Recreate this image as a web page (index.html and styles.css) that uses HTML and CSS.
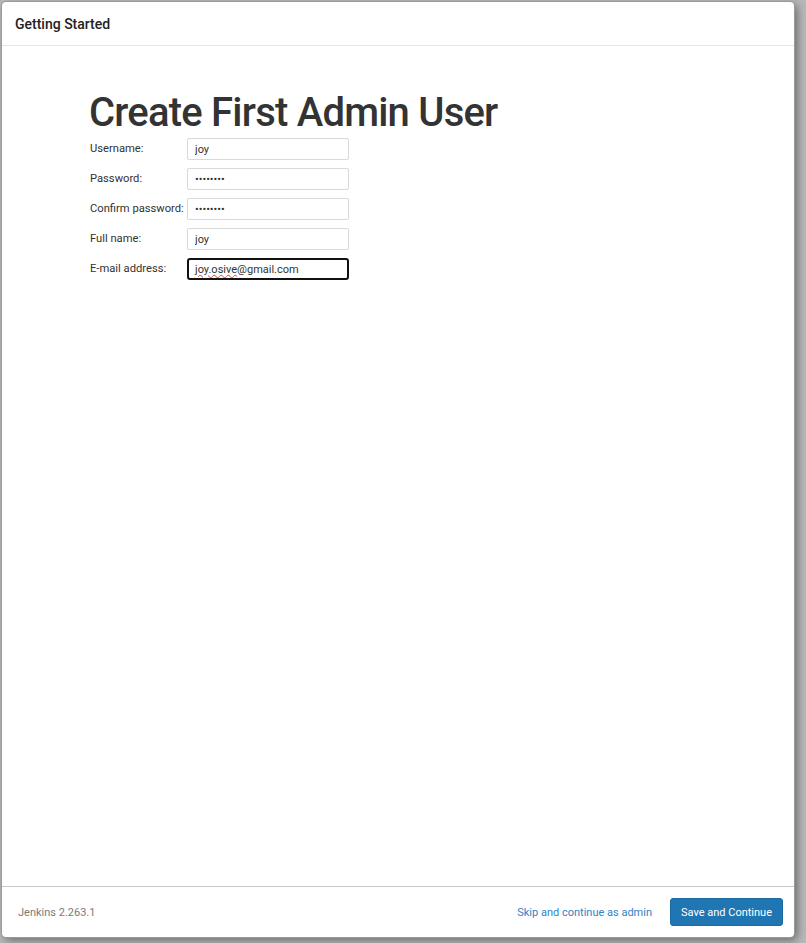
FILE: index.html
```html
<!DOCTYPE html>
<html>
<head>
<meta charset="utf-8">
<link rel="stylesheet" href="styles.css">
</head>
<body>
<div class="modal">
  <div class="modal-header">Getting Started</div>
  <div class="modal-body">
    <h1 class="title">Create First Admin User</h1>
    <div class="form">
      <div class="row"><label class="label">Username:</label><input class="field" type="text" value="joy"></div>
      <div class="row"><label class="label">Password:</label><input class="field" type="password" value="joypass1"></div>
      <div class="row"><label class="label">Confirm password:</label><input class="field" type="password" value="joypass1"></div>
      <div class="row"><label class="label">Full name:</label><input class="field" type="text" value="joy"></div>
      <div class="row"><label class="label">E-mail address:</label><div class="field focused"><span class="spell">joy.osive</span>@gmail.com</div></div>
    </div>
  </div>
  <div class="modal-footer">
    <span class="version">Jenkins 2.263.1</span>
    <div class="actions">
      <a class="skip">Skip and continue as admin</a>
      <button class="btn-primary">Save and Continue</button>
    </div>
  </div>
</div>
</body>
</html>
```
FILE: styles.css
```css
html, body {
  margin: 0;
  height: 100%;
}
body {
  background: #b8b8b8;
  box-sizing: border-box;
  padding: 2px 12px 6px 2px;
  font-family: Roboto, "Liberation Sans", sans-serif;
  color: #333;
}
.modal {
  background: #fff;
  height: 100%;
  border-radius: 4px;
  box-shadow: 0 0 0 1px #9a9a9a, 3px 3px 10px rgba(0,0,0,0.45);
  display: flex;
  flex-direction: column;
}
.modal-header {
  height: 43px;
  border-bottom: 1px solid #e5e5e5;
  display: flex;
  align-items: center;
  padding-left: 13px;
  font-size: 14px;
  font-weight: 500;
  color: #222;
}
.modal-body {
  flex: 1;
  padding: 45px 0 0 87px;
}
.title {
  margin: 0;
  font-size: 40px;
  font-weight: 500;
  letter-spacing: -0.78px;
  line-height: 44px;
  color: #333;
}
.form {
  margin-top: 3px;
  display: flex;
  flex-direction: column;
  gap: 8px;
}
.row {
  display: flex;
  align-items: flex-start;
}
.label {
  width: 97px;
  padding-left: 1px;
  font-size: 11.2px;
  padding-top: 4px;
  color: #333;
}
.field {
  box-sizing: border-box;
  width: 162px;
  height: 22px;
  border: 1px solid #d9d9d9;
  border-radius: 2px;
  padding: 0 7px;
  font-family: Roboto, "Liberation Sans", sans-serif;
  font-size: 11px;
  color: #333;
  margin: 0;
  outline: none;
}
.focused {
  border: 2px solid #111;
  border-radius: 3px;
  padding: 0 6px;
  display: flex;
  align-items: center;
}
.spell {
  text-decoration: underline wavy #e04040;
  text-decoration-thickness: 1px;
  text-underline-offset: 1px;
}
.modal-footer {
  height: 50px;
  border-top: 1px solid #c8c8c8;
  display: flex;
  align-items: center;
  justify-content: space-between;
  padding: 0 11px 0 16px;
}
.version {
  font-size: 11px;
  color: #7a7a7a;
}
.actions {
  display: flex;
  align-items: center;
  gap: 18px;
}
.skip {
  font-size: 11px;
  color: #3182c4;
  cursor: pointer;
}
.btn-primary {
  height: 28px;
  padding: 0 10px;
  background: #1f76b3;
  border: 1px solid #1b6aa2;
  border-radius: 3px;
  color: #fff;
  font-family: Roboto, "Liberation Sans", sans-serif;
  font-size: 11px;
}
```
